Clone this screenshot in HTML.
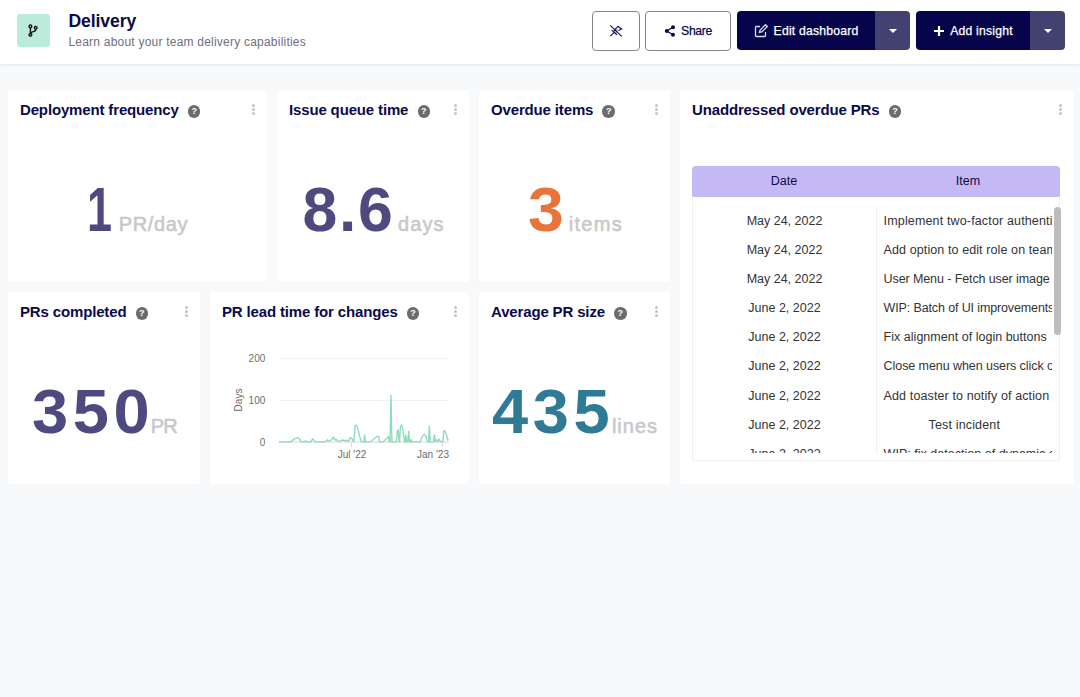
<!DOCTYPE html>
<html><head><meta charset="utf-8">
<style>
*{box-sizing:border-box;margin:0;padding:0}
html,body{width:1080px;height:697px;overflow:hidden}
body{background:#f8f9fa;font-family:"Liberation Sans",sans-serif;color:#0b0a4a;position:relative}
.hdr{position:absolute;left:0;top:0;width:1080px;height:63.500px;background:#fff;box-shadow:0 1px 3px rgba(0,0,0,.08)}
.logo{position:absolute;left:17px;top:14px;width:33px;height:33px;border-radius:3px;background:#bbebdb}
.title{position:absolute;left:68.500px;top:9.200px;font-size:17.600px;line-height:24px;color:#0b0a4a;font-weight:bold;letter-spacing:-.1px}
.sub{position:absolute;left:68.400px;top:34px;font-size:12px;line-height:16px;color:#6d7080;letter-spacing:.22px}
.btn{position:absolute;top:11px;height:39.300px;border-radius:4px;font-size:12.2px;display:flex;align-items:center;justify-content:center;white-space:nowrap}
.btn.o{height:39.800px;background:#fff;border:1px solid #85858f;color:#0b0a4a}
.btn.d{background:#06054b;color:#fff}
.btn .t{-webkit-text-stroke:.25px currentColor;letter-spacing:.2px}
.dd{position:absolute;top:11px;height:39.300px;width:35px;background:#42416f;border-radius:0 4px 4px 0}
.dd:after{content:"";position:absolute;left:14px;top:18px;border:4px solid transparent;border-top:4px solid #fff;border-bottom:0}
.card{position:absolute;background:#fff;border-radius:3px;box-shadow:0 0 2px rgba(0,0,0,.04)}
.ct{position:absolute;left:12px;top:10px;font-size:15px;line-height:20px;font-weight:bold;color:#0b0a4a;white-space:nowrap;letter-spacing:-.15px}
.q{display:inline-block;width:12.500px;height:12.500px;border-radius:50%;background:#6c6c6c;color:#fff;font-size:9px;line-height:12.500px;letter-spacing:0;text-align:center;vertical-align:middle;margin-left:9.200px;font-weight:bold;position:relative;top:.5px}
.dots{position:absolute;right:12px;top:14.100px;width:3px}
.dots i{display:block;width:3px;height:3px;border-radius:50%;background:#c4c4c8;margin-bottom:1px}
.big{position:absolute;left:0;top:80.600px;height:76px;white-space:nowrap;line-height:76px}
.big b{display:inline-block;font-size:62.5px;font-weight:bold;transform-origin:0 50%;vertical-align:baseline}
.big span{display:inline-block;font-size:20px;color:#c8c8cb;-webkit-text-stroke:.55px #c8c8cb;vertical-align:baseline}

.th{position:absolute;left:12px;top:76px;width:368px;height:31px;background:#c4b9f4;border-radius:4px 4px 0 0;font-size:12.5px;color:#0b0a4a}
.th span{position:absolute;top:0;line-height:30px;text-align:center}
.tb{position:absolute;left:12px;top:106px;width:368px;height:265px;border:1px solid #f0f0f1;border-top:0;border-radius:0 0 3px 3px}
.tbi{position:absolute;left:0;top:10.500px;width:359px;height:246.500px;overflow:hidden}
.row{height:29.2px;line-height:29.2px;font-size:12.5px;color:#333;white-space:nowrap;display:flex}
.row .a{width:184px;text-align:center;border-right:1px solid #f0f0f1}
.row .b{width:168px;padding-left:6.600px;text-align:center;letter-spacing:.15px}
.row .b.l{text-align:left}
.thumb{position:absolute;left:361px;top:11px;width:7px;height:128px;border-radius:4px;background:#bdbdbd}
.ax{font-size:10px;fill:#6c6c6c;font-family:"Liberation Sans",sans-serif}
</style></head><body>
<div class="hdr">
 <div class="logo"><svg width="33" height="33" viewBox="0 0 33 33"><g fill="none" stroke="#15151c" stroke-width="1.450"><path d="M13.400 14v5.200M18.700 15.400c0 3-5.300 2-5.300 4"/><circle cx="13.400" cy="12.400" r="1.350"/><circle cx="13.400" cy="20.800" r="1.350"/><circle cx="18.700" cy="13.800" r="1.350"/></g></svg></div>
 <div class="title">Delivery</div>
 <div class="sub">Learn about your team delivery capabilities</div>
 <div class="btn o" style="left:592px;width:48px"><svg width="14" height="14" viewBox="0 0 14 14"><g stroke="#14124f" stroke-width="1.150" fill="none" stroke-linecap="butt"><path d="M7.400 3.900L9.600 6.400L7 9.500L4.800 6.900Z" fill="#14124f" fill-opacity=".35" stroke="none"/><path d="M1.200 1.300L12.700 12.300M1.300 12.100L5 8.600M8.500 2L12.600 5L9.600 6.400M7.400 3.900L8.700 2.900M2.600 6.100L8 10.700M7.400 3.900L4.800 6.900"/></g></svg></div>
 <div class="btn o" style="left:645px;width:86px"><svg width="12" height="12" viewBox="0 0 12 12" style="margin-right:5px"><g fill="#0b0a4a"><circle cx="9" cy="2.300" r="2"/><circle cx="9" cy="9.700" r="2"/><circle cx="2.800" cy="6" r="2"/></g><path d="M9 2.300L2.800 6 9 9.700" stroke="#0b0a4a" stroke-width="1.300" fill="none"/></svg><span class="t" style="letter-spacing:-.35px">Share</span></div>
 <div class="btn d" style="left:737px;width:138px;border-radius:4px 0 0 4px"><svg width="14" height="14" viewBox="0 0 14 14" style="margin-right:6px"><g fill="none" stroke="#dddcf2" stroke-width="1.300"><path d="M6 2.500H2.500a1 1 0 0 0-1 1v8a1 1 0 0 0 1 1h8a1 1 0 0 0 1-1V8"/><path d="M5.500 8.500l.5-2.300 5.500-5.500 1.800 1.800-5.500 5.500z"/></g></svg><span class="t">Edit dashboard</span></div>
 <div class="dd" style="left:875px"></div>
 <div class="btn d" style="left:916px;width:114px;border-radius:4px 0 0 4px"><svg width="12" height="12" viewBox="0 0 12 12" style="margin-right:5px"><path d="M6 1v10M1 6h10" stroke="#fff" stroke-width="2.200"/></svg><span class="t">Add insight</span></div>
 <div class="dd" style="left:1030px"></div>
</div>

<div class="card" style="left:8px;top:90px;width:259px;height:192px"><div class="ct">Deployment frequency<span class="q">?</span></div><div class="dots"><i></i><i></i><i></i></div>
 <div class="big" style="color:#4e4a80"><b style="margin-left:78.600px;transform:scaleX(.72)">1</b><span style="margin-left:-2.500px;letter-spacing:.6px">PR/day</span></div></div>
<div class="card" style="left:277px;top:90px;width:192px;height:192px"><div class="ct">Issue queue time<span class="q">?</span></div><div class="dots"><i></i><i></i><i></i></div>
 <div class="big" style="color:#4e4a80"><b style="margin-left:25.500px;letter-spacing:1.7px">8.6</b><span style="margin-left:3.500px;letter-spacing:1.1px">days</span></div></div>
<div class="card" style="left:479px;top:90px;width:191px;height:192px"><div class="ct">Overdue items<span class="q">?</span></div><div class="dots"><i></i><i></i><i></i></div>
 <div class="big" style="color:#e8743b"><b style="margin-left:49px;transform:scaleX(1.03)">3</b><span style="margin-left:6px;letter-spacing:1.3px">items</span></div></div>
<div class="card" style="left:680px;top:90px;width:393.700px;height:394px"><div class="ct">Unaddressed overdue PRs<span class="q">?</span></div><div class="dots"><i></i><i></i><i></i></div>
<div class="th"><span style="left:0;width:184px">Date</span><span style="left:184px;width:184px">Item</span></div>
<div class="tb"><div class="tbi"><div class="row"><div class="a">May 24, 2022</div><div class="b l">Implement two-factor authentication</div></div><div class="row"><div class="a">May 24, 2022</div><div class="b l" style="letter-spacing:0.1px">Add option to edit role on team page</div></div><div class="row"><div class="a">May 24, 2022</div><div class="b" style="letter-spacing:-0.1px">User Menu - Fetch user image</div></div><div class="row"><div class="a">June 2, 2022</div><div class="b l" style="letter-spacing:-0.13px">WIP: Batch of UI improvements</div></div><div class="row"><div class="a">June 2, 2022</div><div class="b" style="letter-spacing:0.02px">Fix alignment of login buttons</div></div><div class="row"><div class="a">June 2, 2022</div><div class="b l" style="letter-spacing:-0.07px">Close menu when users click outside</div></div><div class="row"><div class="a">June 2, 2022</div><div class="b" style="letter-spacing:0.12px">Add toaster to notify of action</div></div><div class="row"><div class="a">June 2, 2022</div><div class="b">Test incident</div></div><div class="row"><div class="a">June 2, 2022</div><div class="b l" style="letter-spacing:.02px">WIP: fix detection of dynamic content</div></div></div><div class="thumb"></div></div>
</div>
<div class="card" style="left:8px;top:292px;width:192px;height:192px"><div class="ct">PRs completed<span class="q">?</span></div><div class="dots"><i></i><i></i><i></i></div>
 <div class="big" style="color:#4e4a80"><b style="margin-left:24.300px;letter-spacing:4.4px;transform:scaleX(1.04)">350</b><span style="margin-left:1px;letter-spacing:-.8px">PR</span></div></div>
<div class="card" style="left:210px;top:292px;width:259px;height:192px"><div class="ct">PR lead time for changes<span class="q">?</span></div><div class="dots"><i></i><i></i><i></i></div>
<svg style="position:absolute;left:0;top:0" width="259" height="192" viewBox="0 0 259 192"><g stroke="#f1f1f1" stroke-width="1"><path d="M69 66.500H239M69 108.500H239"/></g><path d="M69 150H239" stroke="#d8d8d8" stroke-width="1"/><path d="M141.500 150v5M232.500 150v5" stroke="#dcdcdc" stroke-width="1"/>
<text class="ax" x="55.300" y="70" text-anchor="end">200</text><text class="ax" x="55.300" y="112" text-anchor="end">100</text><text class="ax" x="55.300" y="153.600" text-anchor="end">0</text>
<text class="ax" x="142" y="166" text-anchor="middle">Jul '22</text><text class="ax" x="239" y="166" text-anchor="end">Jan '23</text>
<text class="ax" transform="translate(31.500 108) rotate(-90)" text-anchor="middle">Days</text>
<path d="M69.0 149.9 L80.6 149.9 L84.1 147.1 L87.5 145.5 L89.4 146.6 L91.0 149.9 L94.5 149.9 L95.6 148.7 L97.0 149.9 L100.7 149.9 L102.6 146.8 L104.9 149.4 L105.8 149.9 L115.3 149.9 L117.6 147.8 L118.8 149.4 L121.1 148.0 L123.4 145.2 L125.0 148.0 L126.4 147.5 L128.1 149.4 L130.4 148.9 L132.7 148.0 L135.0 148.9 L136.9 148.2 L138.5 149.4 L140.1 145.5 L141.9 146.6 L143.6 149.9 L144.3 145.2 L145.0 134.1 L146.1 133.2 L147.5 135.5 L149.6 144.1 L151.2 149.9 L154.0 149.9 L154.7 142.9 L155.4 149.9 L160.5 149.9 L163.9 147.1 L167.4 144.3 L168.8 144.1 L169.3 149.9 L173.2 149.9 L175.5 147.5 L178.5 144.5 L179.2 149.9 L180.1 149.9 L181.0 103.2 L181.9 149.9 L186.4 149.9 L187.3 139.4 L188.2 137.8 L189.2 149.9 L189.6 149.9 L190.3 136.0 L191.5 132.7 L192.6 136.0 L194.5 149.9 L195.2 149.9 L195.9 142.9 L196.6 149.9 L197.7 149.9 L198.7 139.4 L199.4 149.9 L200.3 149.9 L201.2 147.5 L202.1 149.9 L210.2 149.9 L211.9 145.2 L214.2 142.2 L215.6 143.4 L217.4 149.9 L218.6 149.9 L219.3 134.1 L220.2 149.9 L223.4 149.9 L224.4 142.9 L225.0 149.9 L226.2 147.5 L227.6 149.9 L229.0 147.1 L230.4 149.4 L231.8 149.9 L232.9 149.9 L233.8 138.7 L235.0 139.2 L236.4 142.4 L237.8 148.0 L238.7 147.5" fill="none" stroke="#8edbba" stroke-width="1.350" stroke-linejoin="round"/></svg>
</div>
<div class="card" style="left:479px;top:292px;width:191px;height:192px"><div class="ct">Average PR size<span class="q">?</span></div><div class="dots"><i></i><i></i><i></i></div>
 <div class="big" style="color:#2f7a94"><b style="margin-left:12.800px;letter-spacing:4.4px;transform:scaleX(1.04)">435</b><span style="margin-left:2.600px;letter-spacing:1px">lines</span></div></div>
</body></html>
